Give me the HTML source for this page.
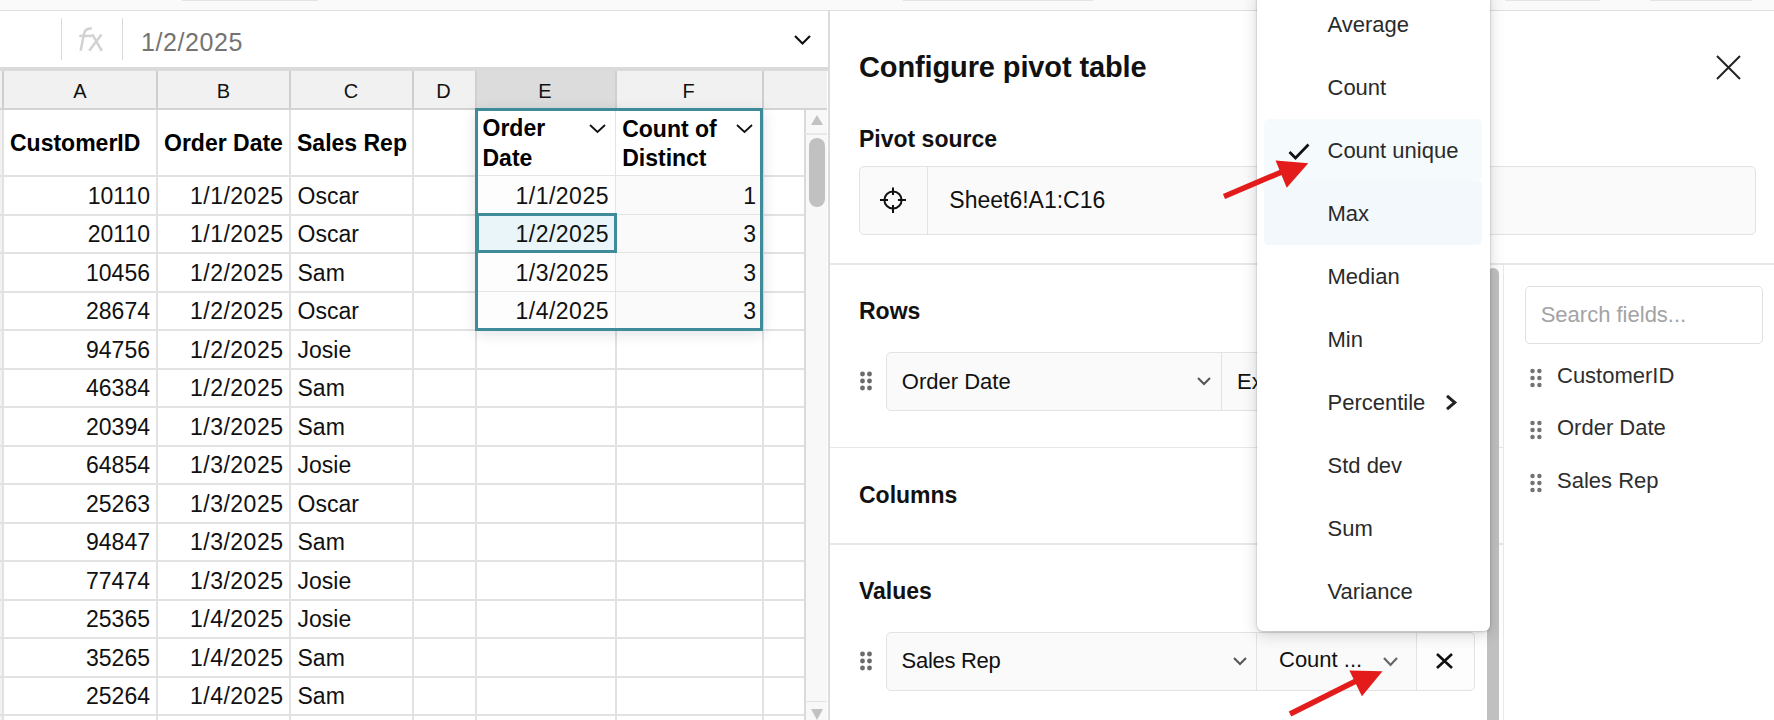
<!DOCTYPE html>
<html><head><meta charset="utf-8"><style>
html,body{margin:0;padding:0;width:1774px;height:720px;overflow:hidden;background:#fff;}
body{position:relative;font-family:"Liberation Sans", sans-serif;}
body>div{position:absolute;}
.t{white-space:nowrap;}
</style></head><body>
<div style="left:0px;top:0px;width:1774px;height:10px;background:#fafafa;"></div>
<div style="left:0px;top:10px;width:1774px;height:1px;background:#dedede;"></div>
<div style="left:182px;top:0px;width:136px;height:1px;background:#e4e4e4;"></div>
<div style="left:903px;top:0px;width:190px;height:1px;background:#e4e4e4;"></div>
<div style="left:1505px;top:0px;width:95px;height:1px;background:#e4e4e4;"></div>
<div style="left:1650px;top:0px;width:102px;height:1px;background:#e4e4e4;"></div>
<div style="left:0px;top:11px;width:828px;height:56px;background:#fff;"></div>
<div style="left:60.5px;top:18px;width:1.5px;height:42px;background:#dadada;"></div>
<div style="left:121.5px;top:18px;width:1.5px;height:42px;background:#dadada;"></div>
<svg style="position:absolute;left:0px;top:0px;overflow:visible" width="130" height="67" viewBox="0 0 130 67"><g fill="none" stroke="#d2d2d2" stroke-width="2.5"><path d="M80.6,50.8 L84.2,33 Q85.6,28.3 91.8,28.6"/><path d="M79.2,35.9 H92"/><path d="M89.2,50.8 L101.5,34.4 M92.3,34.4 L101.8,50.8"/></g></svg>
<div class="t" style="left:141px;top:27.14px;font-size:25px;line-height:30.0px;font-weight:400;color:#747474;letter-spacing:0.6px;">1/2/2025</div>
<svg style="position:absolute;left:794px;top:35px;overflow:visible" width="17" height="10" viewBox="0 0 17 10"><polyline points="1,1 8.5,8.5 16,1" fill="none" stroke="#111" stroke-width="2.2"/></svg>
<div style="left:0px;top:67px;width:828px;height:4px;background:#dadada;"></div>
<div style="left:0px;top:71px;width:827px;height:36.5px;background:#f1f1f1;"></div>
<div style="left:475.5px;top:71px;width:140px;height:36.5px;background:#dcdcdc;"></div>
<div style="left:0px;top:107.5px;width:827px;height:2px;background:#d3d3d3;"></div>
<div style="left:2px;top:71px;width:2px;height:36.5px;background:#cfcfcf;"></div>
<div style="left:156px;top:71px;width:2px;height:36.5px;background:#cfcfcf;"></div>
<div style="left:289px;top:71px;width:2px;height:36.5px;background:#cfcfcf;"></div>
<div style="left:411.5px;top:71px;width:2px;height:36.5px;background:#cfcfcf;"></div>
<div style="left:475px;top:71px;width:2px;height:36.5px;background:#cfcfcf;"></div>
<div style="left:615px;top:71px;width:2px;height:36.5px;background:#cfcfcf;"></div>
<div style="left:761.5px;top:71px;width:2px;height:36.5px;background:#cfcfcf;"></div>
<div class="t" style="left:-220px;width:600px;text-align:center;top:79.47px;font-size:20px;line-height:24.0px;font-weight:400;color:#111;">A</div>
<div class="t" style="left:-76.5px;width:600px;text-align:center;top:79.47px;font-size:20px;line-height:24.0px;font-weight:400;color:#111;">B</div>
<div class="t" style="left:51px;width:600px;text-align:center;top:79.47px;font-size:20px;line-height:24.0px;font-weight:400;color:#111;">C</div>
<div class="t" style="left:143.5px;width:600px;text-align:center;top:79.47px;font-size:20px;line-height:24.0px;font-weight:400;color:#111;">D</div>
<div class="t" style="left:245px;width:600px;text-align:center;top:79.47px;font-size:20px;line-height:24.0px;font-weight:400;color:#111;">E</div>
<div class="t" style="left:388.5px;width:600px;text-align:center;top:79.47px;font-size:20px;line-height:24.0px;font-weight:400;color:#111;">F</div>
<div style="left:0px;top:109.5px;width:805px;height:611px;background:#fff;"></div>
<div style="left:0px;top:109.5px;width:2px;height:611px;background:#f2f2f2;"></div>
<div style="left:2px;top:109.5px;width:2px;height:611px;background:#e2e2e2;"></div>
<div style="left:156px;top:109.5px;width:2px;height:611px;background:#e2e2e2;"></div>
<div style="left:289px;top:109.5px;width:2px;height:611px;background:#e2e2e2;"></div>
<div style="left:411.5px;top:109.5px;width:2px;height:611px;background:#e2e2e2;"></div>
<div style="left:475px;top:109.5px;width:2px;height:611px;background:#e2e2e2;"></div>
<div style="left:615px;top:109.5px;width:2px;height:611px;background:#e2e2e2;"></div>
<div style="left:761.5px;top:109.5px;width:2px;height:611px;background:#e2e2e2;"></div>
<div style="left:0px;top:175.0px;width:805px;height:2px;background:#e2e2e2;"></div>
<div style="left:0px;top:213.5px;width:805px;height:2px;background:#e2e2e2;"></div>
<div style="left:0px;top:252.0px;width:805px;height:2px;background:#e2e2e2;"></div>
<div style="left:0px;top:290.5px;width:805px;height:2px;background:#e2e2e2;"></div>
<div style="left:0px;top:329.0px;width:805px;height:2px;background:#e2e2e2;"></div>
<div style="left:0px;top:367.5px;width:805px;height:2px;background:#e2e2e2;"></div>
<div style="left:0px;top:406.0px;width:805px;height:2px;background:#e2e2e2;"></div>
<div style="left:0px;top:444.5px;width:805px;height:2px;background:#e2e2e2;"></div>
<div style="left:0px;top:483.0px;width:805px;height:2px;background:#e2e2e2;"></div>
<div style="left:0px;top:521.5px;width:805px;height:2px;background:#e2e2e2;"></div>
<div style="left:0px;top:560.0px;width:805px;height:2px;background:#e2e2e2;"></div>
<div style="left:0px;top:598.5px;width:805px;height:2px;background:#e2e2e2;"></div>
<div style="left:0px;top:637.0px;width:805px;height:2px;background:#e2e2e2;"></div>
<div style="left:0px;top:675.5px;width:805px;height:2px;background:#e2e2e2;"></div>
<div style="left:0px;top:714.0px;width:805px;height:2px;background:#e2e2e2;"></div>
<div class="t" style="left:10px;top:129.83px;font-size:23px;line-height:27.6px;font-weight:700;color:#000;">CustomerID</div>
<div class="t" style="left:164px;top:129.83px;font-size:23px;line-height:27.6px;font-weight:700;color:#000;">Order Date</div>
<div class="t" style="left:297px;top:129.83px;font-size:23px;line-height:27.6px;font-weight:700;color:#000;">Sales Rep</div>
<div class="t" style="right:1624px;top:182.83px;font-size:23px;line-height:27.6px;font-weight:400;color:#111;">10110</div>
<div class="t" style="right:1490.5px;top:182.83px;font-size:23px;line-height:27.6px;font-weight:400;color:#111;letter-spacing:0.5px;">1/1/2025</div>
<div class="t" style="left:297.5px;top:182.83px;font-size:23px;line-height:27.6px;font-weight:400;color:#111;">Oscar</div>
<div class="t" style="right:1624px;top:221.33px;font-size:23px;line-height:27.6px;font-weight:400;color:#111;">20110</div>
<div class="t" style="right:1490.5px;top:221.33px;font-size:23px;line-height:27.6px;font-weight:400;color:#111;letter-spacing:0.5px;">1/1/2025</div>
<div class="t" style="left:297.5px;top:221.33px;font-size:23px;line-height:27.6px;font-weight:400;color:#111;">Oscar</div>
<div class="t" style="right:1624px;top:259.83px;font-size:23px;line-height:27.6px;font-weight:400;color:#111;">10456</div>
<div class="t" style="right:1490.5px;top:259.83px;font-size:23px;line-height:27.6px;font-weight:400;color:#111;letter-spacing:0.5px;">1/2/2025</div>
<div class="t" style="left:297.5px;top:259.83px;font-size:23px;line-height:27.6px;font-weight:400;color:#111;">Sam</div>
<div class="t" style="right:1624px;top:298.33px;font-size:23px;line-height:27.6px;font-weight:400;color:#111;">28674</div>
<div class="t" style="right:1490.5px;top:298.33px;font-size:23px;line-height:27.6px;font-weight:400;color:#111;letter-spacing:0.5px;">1/2/2025</div>
<div class="t" style="left:297.5px;top:298.33px;font-size:23px;line-height:27.6px;font-weight:400;color:#111;">Oscar</div>
<div class="t" style="right:1624px;top:336.83px;font-size:23px;line-height:27.6px;font-weight:400;color:#111;">94756</div>
<div class="t" style="right:1490.5px;top:336.83px;font-size:23px;line-height:27.6px;font-weight:400;color:#111;letter-spacing:0.5px;">1/2/2025</div>
<div class="t" style="left:297.5px;top:336.83px;font-size:23px;line-height:27.6px;font-weight:400;color:#111;">Josie</div>
<div class="t" style="right:1624px;top:375.33px;font-size:23px;line-height:27.6px;font-weight:400;color:#111;">46384</div>
<div class="t" style="right:1490.5px;top:375.33px;font-size:23px;line-height:27.6px;font-weight:400;color:#111;letter-spacing:0.5px;">1/2/2025</div>
<div class="t" style="left:297.5px;top:375.33px;font-size:23px;line-height:27.6px;font-weight:400;color:#111;">Sam</div>
<div class="t" style="right:1624px;top:413.83px;font-size:23px;line-height:27.6px;font-weight:400;color:#111;">20394</div>
<div class="t" style="right:1490.5px;top:413.83px;font-size:23px;line-height:27.6px;font-weight:400;color:#111;letter-spacing:0.5px;">1/3/2025</div>
<div class="t" style="left:297.5px;top:413.83px;font-size:23px;line-height:27.6px;font-weight:400;color:#111;">Sam</div>
<div class="t" style="right:1624px;top:452.33px;font-size:23px;line-height:27.6px;font-weight:400;color:#111;">64854</div>
<div class="t" style="right:1490.5px;top:452.33px;font-size:23px;line-height:27.6px;font-weight:400;color:#111;letter-spacing:0.5px;">1/3/2025</div>
<div class="t" style="left:297.5px;top:452.33px;font-size:23px;line-height:27.6px;font-weight:400;color:#111;">Josie</div>
<div class="t" style="right:1624px;top:490.83px;font-size:23px;line-height:27.6px;font-weight:400;color:#111;">25263</div>
<div class="t" style="right:1490.5px;top:490.83px;font-size:23px;line-height:27.6px;font-weight:400;color:#111;letter-spacing:0.5px;">1/3/2025</div>
<div class="t" style="left:297.5px;top:490.83px;font-size:23px;line-height:27.6px;font-weight:400;color:#111;">Oscar</div>
<div class="t" style="right:1624px;top:529.33px;font-size:23px;line-height:27.6px;font-weight:400;color:#111;">94847</div>
<div class="t" style="right:1490.5px;top:529.33px;font-size:23px;line-height:27.6px;font-weight:400;color:#111;letter-spacing:0.5px;">1/3/2025</div>
<div class="t" style="left:297.5px;top:529.33px;font-size:23px;line-height:27.6px;font-weight:400;color:#111;">Sam</div>
<div class="t" style="right:1624px;top:567.83px;font-size:23px;line-height:27.6px;font-weight:400;color:#111;">77474</div>
<div class="t" style="right:1490.5px;top:567.83px;font-size:23px;line-height:27.6px;font-weight:400;color:#111;letter-spacing:0.5px;">1/3/2025</div>
<div class="t" style="left:297.5px;top:567.83px;font-size:23px;line-height:27.6px;font-weight:400;color:#111;">Josie</div>
<div class="t" style="right:1624px;top:606.33px;font-size:23px;line-height:27.6px;font-weight:400;color:#111;">25365</div>
<div class="t" style="right:1490.5px;top:606.33px;font-size:23px;line-height:27.6px;font-weight:400;color:#111;letter-spacing:0.5px;">1/4/2025</div>
<div class="t" style="left:297.5px;top:606.33px;font-size:23px;line-height:27.6px;font-weight:400;color:#111;">Josie</div>
<div class="t" style="right:1624px;top:644.83px;font-size:23px;line-height:27.6px;font-weight:400;color:#111;">35265</div>
<div class="t" style="right:1490.5px;top:644.83px;font-size:23px;line-height:27.6px;font-weight:400;color:#111;letter-spacing:0.5px;">1/4/2025</div>
<div class="t" style="left:297.5px;top:644.83px;font-size:23px;line-height:27.6px;font-weight:400;color:#111;">Sam</div>
<div class="t" style="right:1624px;top:683.33px;font-size:23px;line-height:27.6px;font-weight:400;color:#111;">25264</div>
<div class="t" style="right:1490.5px;top:683.33px;font-size:23px;line-height:27.6px;font-weight:400;color:#111;letter-spacing:0.5px;">1/4/2025</div>
<div class="t" style="left:297.5px;top:683.33px;font-size:23px;line-height:27.6px;font-weight:400;color:#111;">Sam</div>
<div style="left:475.5px;top:108.5px;width:287.5px;height:221.5px;box-shadow:0 3px 14px rgba(0,0,0,0.13);background:#fff;"></div>
<div style="left:477px;top:110px;width:284px;height:65px;background:#fff;"></div>
<div style="left:477px;top:175.5px;width:138.5px;height:38.5px;background:#fdfdfd;"></div>
<div style="left:616px;top:175.5px;width:145px;height:38.5px;background:#fafafa;"></div>
<div style="left:477px;top:175.0px;width:284px;height:1.2px;background:#e4e4e4;"></div>
<div style="left:477px;top:214.0px;width:138.5px;height:38.5px;background:#fdfdfd;"></div>
<div style="left:616px;top:214.0px;width:145px;height:38.5px;background:#fafafa;"></div>
<div style="left:477px;top:213.5px;width:284px;height:1.2px;background:#e4e4e4;"></div>
<div style="left:477px;top:252.5px;width:138.5px;height:38.5px;background:#fdfdfd;"></div>
<div style="left:616px;top:252.5px;width:145px;height:38.5px;background:#fafafa;"></div>
<div style="left:477px;top:252.0px;width:284px;height:1.2px;background:#e4e4e4;"></div>
<div style="left:477px;top:291.0px;width:138.5px;height:38.5px;background:#fdfdfd;"></div>
<div style="left:616px;top:291.0px;width:145px;height:38.5px;background:#fafafa;"></div>
<div style="left:477px;top:290.5px;width:284px;height:1.2px;background:#e4e4e4;"></div>
<div style="left:615px;top:110px;width:1.2px;height:218px;background:#e4e4e4;"></div>
<div style="left:475px;top:108px;width:288.29999999999995px;height:222.5px;border:3px solid #3f8b99;box-sizing:border-box;"></div>
<div class="t" style="left:482.5px;top:115.43px;font-size:23px;line-height:27.6px;font-weight:700;color:#000;">Order</div>
<div class="t" style="left:482.5px;top:144.53px;font-size:23px;line-height:27.6px;font-weight:700;color:#000;">Date</div>
<div class="t" style="left:622.2px;top:115.63px;font-size:23px;line-height:27.6px;font-weight:700;color:#000;">Count of</div>
<div class="t" style="left:622.2px;top:144.53px;font-size:23px;line-height:27.6px;font-weight:700;color:#000;">Distinct</div>
<svg style="position:absolute;left:589px;top:124px;overflow:visible" width="17" height="9" viewBox="0 0 17 9"><polyline points="1,1 8.5,8 16,1" fill="none" stroke="#111" stroke-width="1.8"/></svg>
<svg style="position:absolute;left:736px;top:124px;overflow:visible" width="17" height="9" viewBox="0 0 17 9"><polyline points="1,1 8.5,8 16,1" fill="none" stroke="#111" stroke-width="1.8"/></svg>
<div style="left:475.5px;top:213px;width:141.25px;height:40.25px;border:3px solid #3f8b99;box-sizing:border-box;background:#e9f5f8;"></div>
<div class="t" style="right:1165.0px;top:182.83px;font-size:23px;line-height:27.6px;font-weight:400;color:#111;letter-spacing:0.5px;">1/1/2025</div>
<div class="t" style="right:1018px;top:182.83px;font-size:23px;line-height:27.6px;font-weight:400;color:#111;">1</div>
<div class="t" style="right:1165.0px;top:221.33px;font-size:23px;line-height:27.6px;font-weight:400;color:#111;letter-spacing:0.5px;">1/2/2025</div>
<div class="t" style="right:1018px;top:221.33px;font-size:23px;line-height:27.6px;font-weight:400;color:#111;">3</div>
<div class="t" style="right:1165.0px;top:259.83px;font-size:23px;line-height:27.6px;font-weight:400;color:#111;letter-spacing:0.5px;">1/3/2025</div>
<div class="t" style="right:1018px;top:259.83px;font-size:23px;line-height:27.6px;font-weight:400;color:#111;">3</div>
<div class="t" style="right:1165.0px;top:298.33px;font-size:23px;line-height:27.6px;font-weight:400;color:#111;letter-spacing:0.5px;">1/4/2025</div>
<div class="t" style="right:1018px;top:298.33px;font-size:23px;line-height:27.6px;font-weight:400;color:#111;">3</div>
<div style="left:805px;top:109.5px;width:22px;height:611px;background:#f8f8f8;"></div>
<div style="left:804.3px;top:109.5px;width:1.6px;height:611px;background:#dadada;"></div>
<div style="left:805px;top:133px;width:22px;height:1.5px;background:#e8e8e8;"></div>
<svg style="position:absolute;left:811px;top:114.8px;overflow:visible" width="12" height="10" viewBox="0 0 12 10"><polygon points="6,0 12,10 0,10" fill="#c2c2c2"/></svg>
<div style="left:809px;top:138px;width:16px;height:69px;background:#c1c1c1;border-radius:8px;"></div>
<div style="left:805px;top:700.5px;width:22px;height:1.5px;background:#e4e4e4;"></div>
<svg style="position:absolute;left:811px;top:709px;overflow:visible" width="12" height="11" viewBox="0 0 12 11"><polygon points="0,0 12,0 6,11" fill="#c2c2c2"/></svg>
<div style="left:827.5px;top:11px;width:2.5px;height:709px;background:#dcdcdc;"></div>
<div style="left:830px;top:11px;width:944px;height:709px;background:#fff;"></div>
<div class="t" style="left:859px;top:50.15px;font-size:29px;line-height:34.8px;font-weight:700;color:#111;letter-spacing:-0.12px;">Configure pivot table</div>
<svg style="position:absolute;left:1716px;top:55px;overflow:visible" width="25" height="25" viewBox="0 0 25 25"><path d="M1,1 L24,24 M24,1 L1,24" stroke="#222" stroke-width="2" fill="none"/></svg>
<div class="t" style="left:859px;top:126.33px;font-size:23px;line-height:27.6px;font-weight:700;color:#111;">Pivot source</div>
<div style="left:859px;top:165.5px;width:897px;height:69.0px;background:#fafafa;border:1.5px solid #e3e3e3;border-radius:5px;box-sizing:border-box;"></div>
<div style="left:926.5px;top:166px;width:1.5px;height:68px;background:#e3e3e3;"></div>
<svg style="position:absolute;left:880px;top:186.7px;overflow:visible" width="26" height="26" viewBox="0 0 26 26"><circle cx="13" cy="13" r="8.6" fill="none" stroke="#111" stroke-width="2"/><path d="M13,0.5 V8 M13,18 V26 M0,13 H8 M18,13 H26" stroke="#111" stroke-width="2"/></svg>
<div class="t" style="left:949.3px;top:187.33px;font-size:23px;line-height:27.6px;font-weight:400;color:#111;">Sheet6!A1:C16</div>
<div style="left:830px;top:263px;width:944px;height:1.5px;background:#e8e8e8;"></div>
<div class="t" style="left:859px;top:298.03px;font-size:23px;line-height:27.6px;font-weight:700;color:#111;">Rows</div>
<svg style="position:absolute;left:859.5px;top:372px;overflow:visible" width="12" height="18" viewBox="0 0 12 18"><circle cx="2.5" cy="2" r="2.45" fill="#6b6b6b"/><circle cx="2.5" cy="9" r="2.45" fill="#6b6b6b"/><circle cx="2.5" cy="16" r="2.45" fill="#6b6b6b"/><circle cx="9.5" cy="2" r="2.45" fill="#6b6b6b"/><circle cx="9.5" cy="9" r="2.45" fill="#6b6b6b"/><circle cx="9.5" cy="16" r="2.45" fill="#6b6b6b"/></svg>
<div style="left:886px;top:352px;width:414px;height:59px;background:#fafafa;border:1.5px solid #e3e3e3;border-radius:5px;box-sizing:border-box;"></div>
<div style="left:1220.5px;top:353px;width:1.5px;height:57px;background:#e3e3e3;"></div>
<div class="t" style="left:901.8px;top:368.98px;font-size:22px;line-height:26.4px;font-weight:400;color:#111;">Order Date</div>
<svg style="position:absolute;left:1197px;top:377px;overflow:visible" width="14" height="9" viewBox="0 0 14 9"><polyline points="1,1 7,7 13,1" fill="none" stroke="#555" stroke-width="2"/></svg>
<div class="t" style="left:1237px;top:368.98px;font-size:22px;line-height:26.4px;font-weight:400;color:#111;">Ex</div>
<div style="left:830px;top:446.5px;width:673px;height:1.5px;background:#e8e8e8;"></div>
<div class="t" style="left:859px;top:482.23px;font-size:23px;line-height:27.6px;font-weight:700;color:#111;">Columns</div>
<div style="left:830px;top:543px;width:673px;height:1.5px;background:#e8e8e8;"></div>
<div class="t" style="left:859px;top:578.43px;font-size:23px;line-height:27.6px;font-weight:700;color:#111;">Values</div>
<svg style="position:absolute;left:859.5px;top:651.5px;overflow:visible" width="12" height="18" viewBox="0 0 12 18"><circle cx="2.5" cy="2" r="2.45" fill="#6b6b6b"/><circle cx="2.5" cy="9" r="2.45" fill="#6b6b6b"/><circle cx="2.5" cy="16" r="2.45" fill="#6b6b6b"/><circle cx="9.5" cy="2" r="2.45" fill="#6b6b6b"/><circle cx="9.5" cy="9" r="2.45" fill="#6b6b6b"/><circle cx="9.5" cy="16" r="2.45" fill="#6b6b6b"/></svg>
<div style="left:886px;top:632px;width:589px;height:58.5px;background:#fafafa;border:1.5px solid #e3e3e3;border-radius:5px;box-sizing:border-box;"></div>
<div style="left:1255.5px;top:633px;width:1.5px;height:57px;background:#e3e3e3;"></div>
<div style="left:1415.5px;top:633px;width:1.5px;height:57px;background:#e3e3e3;"></div>
<div style="left:1417px;top:633.5px;width:56.5px;height:55.5px;background:#fdfdfd;border-radius:0 4px 4px 0;"></div>
<div class="t" style="left:901.6px;top:647.98px;font-size:22px;line-height:26.4px;font-weight:400;color:#111;letter-spacing:-0.3px;">Sales Rep</div>
<svg style="position:absolute;left:1233px;top:657px;overflow:visible" width="14" height="9" viewBox="0 0 14 9"><polyline points="1,1 7,7 13,1" fill="none" stroke="#555" stroke-width="2"/></svg>
<div class="t" style="left:1279px;top:647.48px;font-size:22px;line-height:26.4px;font-weight:400;color:#111;">Count ...</div>
<svg style="position:absolute;left:1383px;top:657px;overflow:visible" width="15" height="10" viewBox="0 0 15 10"><polyline points="1,1 7.5,8 14,1" fill="none" stroke="#666" stroke-width="2.2"/></svg>
<svg style="position:absolute;left:1436px;top:653px;overflow:visible" width="17" height="16" viewBox="0 0 17 16"><path d="M1,1 L16,15 M16,1 L1,15" stroke="#111" stroke-width="2.6" fill="none"/></svg>
<div style="left:1487px;top:268px;width:12px;height:452px;background:#c0c0c0;border-radius:6px 6px 0 0;"></div>
<div style="left:1502.5px;top:264px;width:1.5px;height:456px;background:#e8e8e8;"></div>
<div style="left:1525px;top:285.5px;width:237.5px;height:58.5px;background:#fff;border:1.5px solid #e0e0e0;border-radius:5px;box-sizing:border-box;"></div>
<div class="t" style="left:1540.7px;top:302.38px;font-size:22px;line-height:26.4px;font-weight:400;color:#a3a3a3;">Search fields...</div>
<svg style="position:absolute;left:1530px;top:368.6px;overflow:visible" width="12" height="18" viewBox="0 0 12 18"><circle cx="2.5" cy="2" r="2.25" fill="#737373"/><circle cx="2.5" cy="9" r="2.25" fill="#737373"/><circle cx="2.5" cy="16" r="2.25" fill="#737373"/><circle cx="9.4" cy="2" r="2.25" fill="#737373"/><circle cx="9.4" cy="9" r="2.25" fill="#737373"/><circle cx="9.4" cy="16" r="2.25" fill="#737373"/></svg>
<div class="t" style="left:1557px;top:362.58px;font-size:22px;line-height:26.4px;font-weight:400;color:#2e2e2e;">CustomerID</div>
<svg style="position:absolute;left:1530px;top:421px;overflow:visible" width="12" height="18" viewBox="0 0 12 18"><circle cx="2.5" cy="2" r="2.25" fill="#737373"/><circle cx="2.5" cy="9" r="2.25" fill="#737373"/><circle cx="2.5" cy="16" r="2.25" fill="#737373"/><circle cx="9.4" cy="2" r="2.25" fill="#737373"/><circle cx="9.4" cy="9" r="2.25" fill="#737373"/><circle cx="9.4" cy="16" r="2.25" fill="#737373"/></svg>
<div class="t" style="left:1557px;top:414.98px;font-size:22px;line-height:26.4px;font-weight:400;color:#2e2e2e;">Order Date</div>
<svg style="position:absolute;left:1530px;top:473.6px;overflow:visible" width="12" height="18" viewBox="0 0 12 18"><circle cx="2.5" cy="2" r="2.25" fill="#737373"/><circle cx="2.5" cy="9" r="2.25" fill="#737373"/><circle cx="2.5" cy="16" r="2.25" fill="#737373"/><circle cx="9.4" cy="2" r="2.25" fill="#737373"/><circle cx="9.4" cy="9" r="2.25" fill="#737373"/><circle cx="9.4" cy="16" r="2.25" fill="#737373"/></svg>
<div class="t" style="left:1557px;top:467.58px;font-size:22px;line-height:26.4px;font-weight:400;color:#2e2e2e;">Sales Rep</div>
<div style="left:1257px;top:-10px;width:232.5px;height:640.5px;background:#fff;border-radius:6px;box-shadow:0 0 2px rgba(0,0,0,0.18),0 1px 3px rgba(0,0,0,0.12),0 4px 16px rgba(0,0,0,0.16);"></div>
<div style="left:1264px;top:118.5px;width:218px;height:62.5px;background:#f5fafc;border-radius:5px;"></div>
<div style="left:1264px;top:181px;width:218px;height:64px;background:#f2f8fb;border-radius:5px;"></div>
<div class="t" style="left:1327.5px;top:12.28px;font-size:22px;line-height:26.4px;font-weight:400;color:#2a2a2a;">Average</div>
<div class="t" style="left:1327.5px;top:75.28px;font-size:22px;line-height:26.4px;font-weight:400;color:#2a2a2a;">Count</div>
<div class="t" style="left:1327.5px;top:138.28px;font-size:22px;line-height:26.4px;font-weight:400;color:#2a2a2a;">Count unique</div>
<div class="t" style="left:1327.5px;top:201.28px;font-size:22px;line-height:26.4px;font-weight:400;color:#2a2a2a;">Max</div>
<div class="t" style="left:1327.5px;top:264.28px;font-size:22px;line-height:26.4px;font-weight:400;color:#2a2a2a;">Median</div>
<div class="t" style="left:1327.5px;top:327.28px;font-size:22px;line-height:26.4px;font-weight:400;color:#2a2a2a;">Min</div>
<div class="t" style="left:1327.5px;top:390.28px;font-size:22px;line-height:26.4px;font-weight:400;color:#2a2a2a;">Percentile</div>
<div class="t" style="left:1327.5px;top:453.28px;font-size:22px;line-height:26.4px;font-weight:400;color:#2a2a2a;">Std dev</div>
<div class="t" style="left:1327.5px;top:516.28px;font-size:22px;line-height:26.4px;font-weight:400;color:#2a2a2a;">Sum</div>
<div class="t" style="left:1327.5px;top:579.28px;font-size:22px;line-height:26.4px;font-weight:400;color:#2a2a2a;">Variance</div>
<svg style="position:absolute;left:1288px;top:143px;overflow:visible" width="22" height="17" viewBox="0 0 22 17"><polyline points="1.5,9 7.5,15 20.5,1.5" fill="none" stroke="#111" stroke-width="2.7"/></svg>
<svg style="position:absolute;left:1445px;top:394px;overflow:visible" width="12" height="17" viewBox="0 0 12 17"><polyline points="2,1.8 9.8,8.5 2,15.2" fill="none" stroke="#222" stroke-width="3"/></svg>
<svg style="position:absolute;left:0px;top:0px;overflow:visible" width="1774" height="720" viewBox="0 0 1774 720"><line x1="1224" x2="1284" y1="196.5" y2="171" stroke="#e31b1b" stroke-width="5.5"/><polygon points="1275.6,160.6 1308.3,163.3 1286.7,187.8" fill="#e31b1b"/><line x1="1290" x2="1358" y1="714" y2="680" stroke="#e31b1b" stroke-width="5.5"/><polygon points="1349.4,670.6 1382.5,671.25 1361.9,696.25" fill="#e31b1b"/></svg>
</body></html>
